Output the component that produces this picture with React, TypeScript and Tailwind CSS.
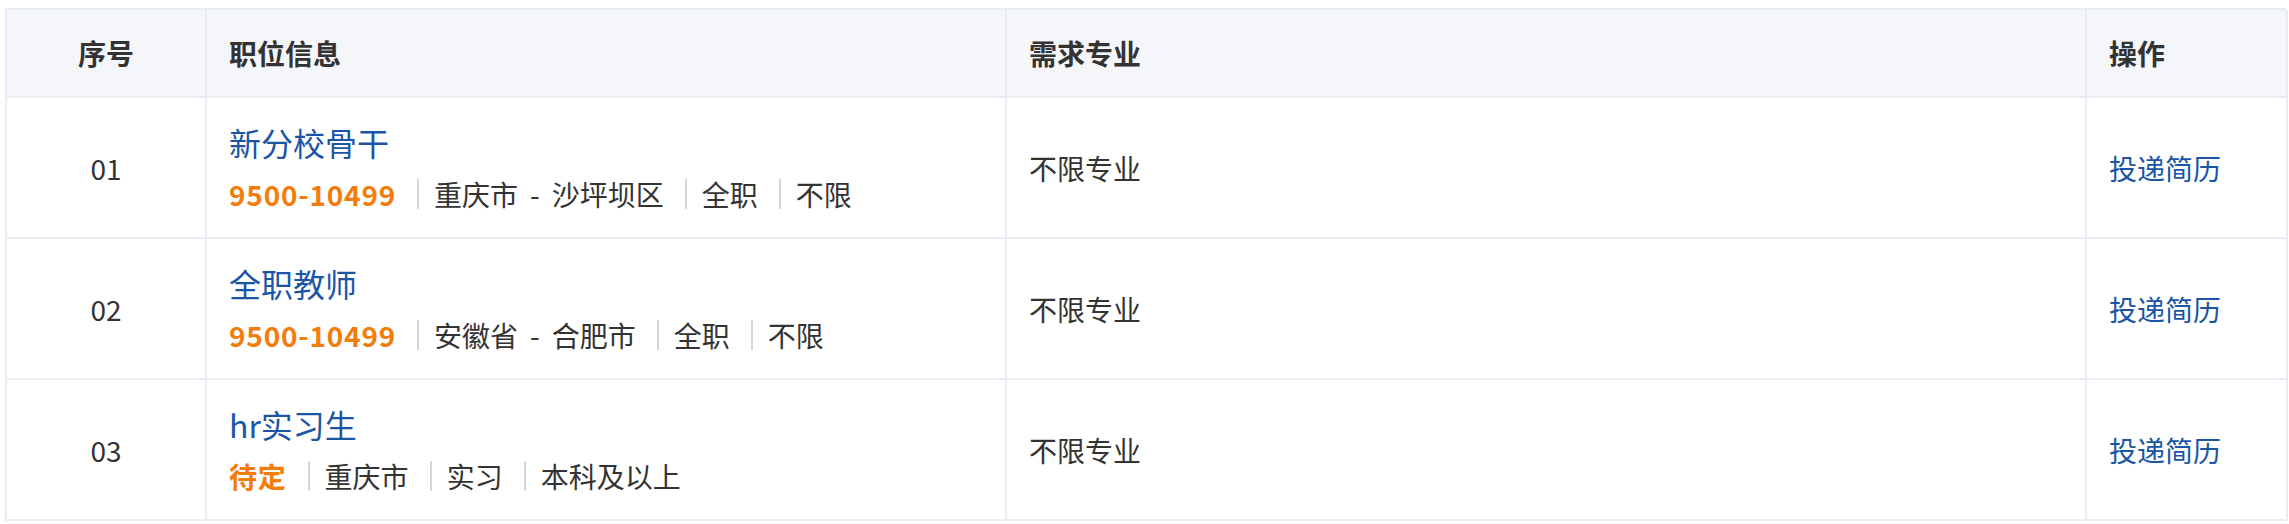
const jobs = [
  { no: '01', title: '新分校骨干', salary: '9500-10499', meta: ['重庆市 - 沙坪坝区', '全职', '不限'] },
  { no: '02', title: '全职教师', salary: '9500-10499', meta: ['安徽省 - 合肥市', '全职', '不限'] },
  { no: '03', title: 'hr实习生', salary: '待定', meta: ['重庆市', '实习', '本科及以上'] },
]

const cell = 'border-r-2 border-b-2 border-[#e9ecf2]'

// "省 - 市" gets a little wider spacing around the dash, like the original
function Place({ text }: { text: string }) {
  const parts = text.split(' - ')
  if (parts.length < 2) return <>{text}</>
  return (
    <>
      {parts[0]}
      <span className="mx-[12px]">-</span>
      {parts[1]}
    </>
  )
}

export default function App() {
  return (
    <div
      className="min-h-[524px] bg-white pl-[5px] pt-[8px] text-[#333]"
      style={{ fontFamily: '"Noto Sans CJK SC", "Noto Sans", sans-serif' }}
    >
      <div className="grid w-[2281px] grid-cols-[200px_800px_1080px_201px] border-l-2 border-t-2 border-[#e9ecf2]">
        <div className={`${cell} flex h-[88px] items-center justify-center bg-[#f5f6fa] text-[28px] font-bold`}>序号</div>
        <div className={`${cell} flex h-[88px] items-center bg-[#f5f6fa] pl-[22px] text-[28px] font-bold`}>职位信息</div>
        <div className={`${cell} flex h-[88px] items-center bg-[#f5f6fa] pl-[22px] text-[28px] font-bold`}>需求专业</div>
        <div className={`${cell} flex h-[88px] items-center bg-[#f5f6fa] pl-[22px] text-[28px] font-bold`}>操作</div>

        {jobs.map((job) => (
          <div key={job.no} className="contents">
            <div className={`${cell} flex h-[141px] items-center justify-center text-[28px]`}>{job.no}</div>
            <div className={`${cell} flex h-[141px] flex-col justify-center pl-[22px]`}>
              <a className="-mt-[2px] text-[32px] leading-[44px] text-[#1b56a6]">{job.title}</a>
              <div className="mt-[10px] flex items-center text-[28px] leading-[40px]">
                <span className="font-bold tracking-[0.8px] text-[#f27d0c]">{job.salary}</span>
                {job.meta.map((m) => (
                  <span key={m} className="ml-[21px] flex h-[30px] items-center border-l-2 border-[#d4d6da] pl-[15px]">
                    <Place text={m} />
                  </span>
                ))}
              </div>
            </div>
            <div className={`${cell} flex h-[141px] items-center pl-[22px] text-[28px]`}>不限专业</div>
            <div className={`${cell} flex h-[141px] items-center pl-[22px] text-[28px] text-[#1b56a6]`}>投递简历</div>
          </div>
        ))}
      </div>
    </div>
  )
}
